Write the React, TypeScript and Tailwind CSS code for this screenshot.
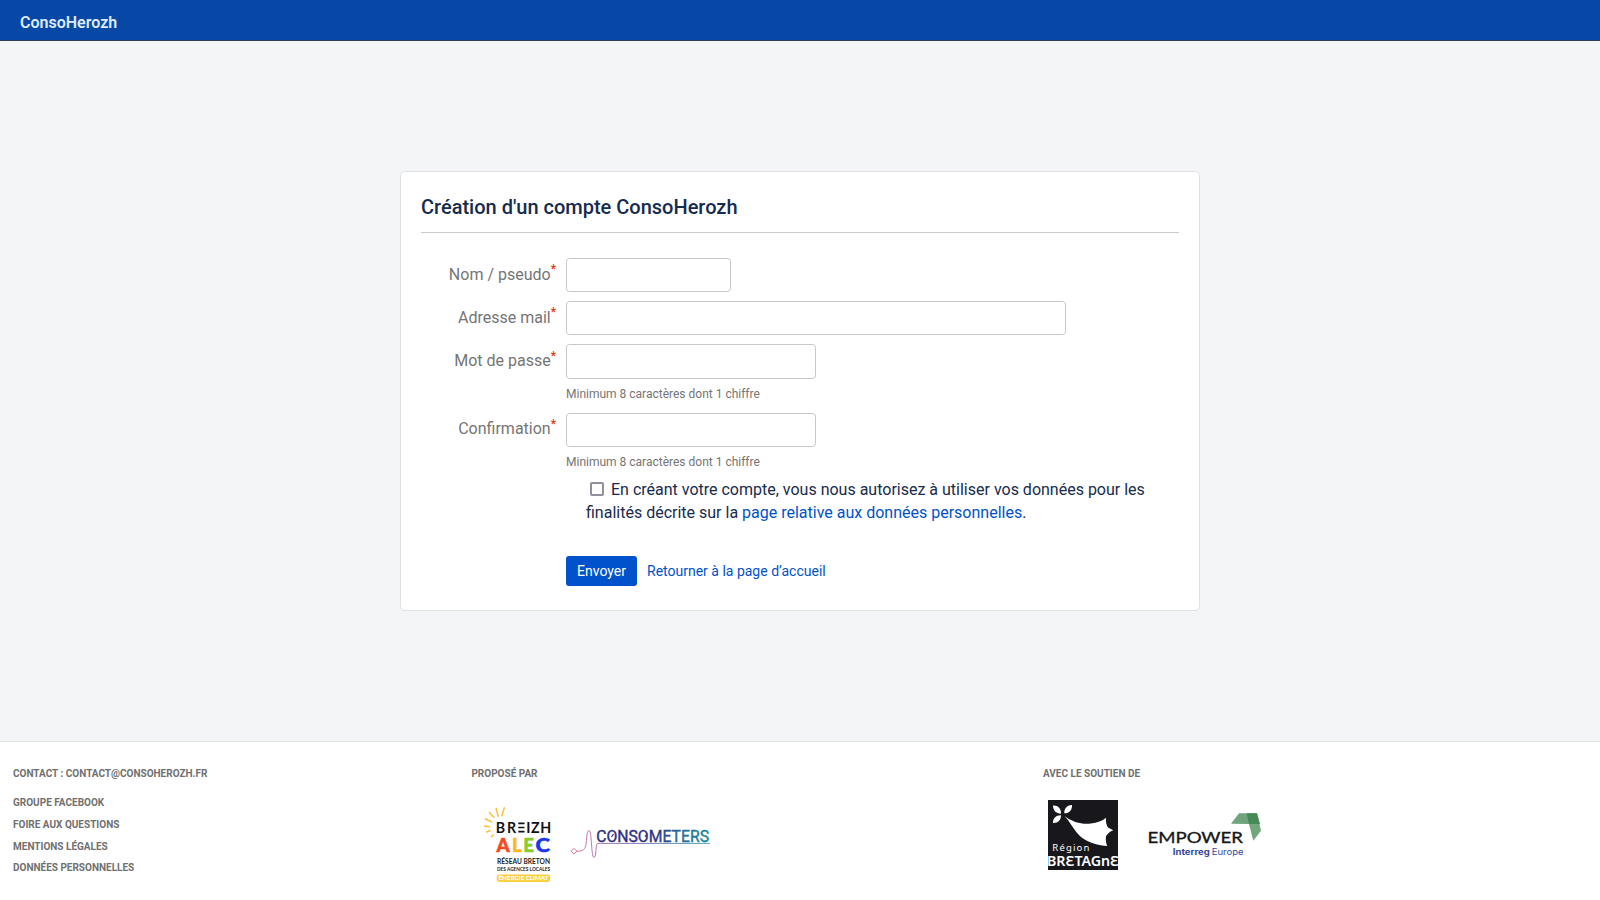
import React from "react";

type FieldProps = {
  id: string;
  label: string;
  type?: string;
  inputClass: string;
  labelClass?: string;
  markClass?: string;
  className?: string;
  description?: string;
};

function Field({
  id,
  label,
  type = "text",
  inputClass,
  labelClass = "pt-[6px]",
  markClass = "-top-[7px]",
  className = "",
  description,
}: FieldProps) {
  return (
    <div className={`flex gap-[10px] ${className}`}>
      <label htmlFor={id} className={`w-[135px] shrink-0 text-right text-[#757575] ${labelClass}`}>
        {label}
        <span className={`relative text-[12px] leading-none font-medium text-[#de350b] ${markClass}`}>*</span>
      </label>
      <div className="flex flex-col">
        <input
          id={id}
          type={type}
          className={`rounded-[3.5px] border border-[#c7c7c9] bg-white px-2 outline-none ${inputClass}`}
        />
        {description && <div className="mt-[5px] text-xs leading-5 text-[#757575]">{description}</div>}
      </div>
    </div>
  );
}

function BreizhAlecLogo() {
  return (
    <svg width="80" height="85" viewBox="0 0 80 85" fontFamily="Lato, sans-serif" aria-label="Breizh ALEC">
      <path
        d="M29.5 7.3 26.7 16.3M21 8l2.3 8.700M14 12l5.300 5.700M10 18.700l7 3.300M9 26l6 .700M11.300 32.300l4.200-2M16.300 37.300l2.200-2.800"
        stroke="#fbbf3a"
        strokeWidth="1.500"
      />
      <text y="32.600" fontSize="14.200" fontWeight="700" fill="#111" x="20.800 32">BR</text>
      <path d="M43.300 23.300h6.200M43.300 27.500h6.200M43.300 31.700h6.200" stroke="#111" strokeWidth="1.700" />
      <text y="32.600" fontSize="14.200" fontWeight="700" fill="#111" x="51.200 56 65.200">IZH</text>
      <g fontSize="18.800" fontWeight="900" strokeWidth="0.500">
        <text x="21.400" y="51.800" fill="#f4481e" stroke="#f4481e">A</text>
        <text x="37" y="51.800" fill="#fdb823" stroke="#fdb823">L</text>
        <text x="48.200" y="51.800" fill="#8ccb2b" stroke="#8ccb2b">E</text>
        <text x="60.500" y="51.800" fill="#1a35ee" stroke="#1a35ee" textLength="14.500" lengthAdjust="spacingAndGlyphs">C</text>
      </g>
      <text x="22" y="64" fontSize="7" fontWeight="700" fill="#222" textLength="53" lengthAdjust="spacingAndGlyphs">RÉSEAU BRETON</text>
      <text x="22" y="71.400" fontSize="5.200" fontWeight="700" fill="#222" textLength="53" lengthAdjust="spacingAndGlyphs">DES AGENCES LOCALES</text>
      <rect x="21.700" y="74.600" width="53.600" height="7.400" rx="3" fill="#fbd043" />
      <text x="23.500" y="80.400" fontSize="5.700" fontWeight="900" fill="#fff" textLength="50" lengthAdjust="spacingAndGlyphs">ÉNERGIE CLIMAT</text>
    </svg>
  );
}

function ConsometersLogo() {
  return (
    <svg width="150" height="50" viewBox="0 0 150 50" aria-label="Consometers">
      <defs>
        <linearGradient id="cm-line" gradientUnits="userSpaceOnUse" x1="5" y1="0" x2="145" y2="0">
          <stop offset="0" stopColor="#f0647f" />
          <stop offset="0.2" stopColor="#a06bb0" />
          <stop offset="0.5" stopColor="#6a69b0" />
          <stop offset="1" stopColor="#3a9fa8" />
        </linearGradient>
        <linearGradient id="cm-text" gradientUnits="userSpaceOnUse" x1="32" y1="0" x2="144" y2="0">
          <stop offset="0" stopColor="#2b2a78" />
          <stop offset="0.5" stopColor="#2a3184" />
          <stop offset="0.72" stopColor="#28679a" />
          <stop offset="1" stopColor="#148692" />
        </linearGradient>
      </defs>
      <path
        d="M12 36.200c6 0 8.500-1.500 9.200-8C21.900 21 22 15.500 24 15.500C27 15.500 26 42.500 29 42.500C31.500 42.500 30.500 28.400 32.500 28.400H145M6 36.200 9 33.500 12 36.200 9 38.900Z"
        fill="none"
        stroke="url(#cm-line)"
        strokeWidth="0.900"
      />
      <text x="31.200" y="26.800" fontFamily="Roboto, sans-serif" fontSize="16" fontWeight="400" fill="url(#cm-text)" stroke="url(#cm-text)" strokeWidth="0.350" textLength="112.800" lengthAdjust="spacingAndGlyphs">CONSOMETERS</text>
      <path d="m46.500 21.800 2-2.600M80 21.800l2-2.600" stroke="#2b2a78" strokeWidth="1.100" />
    </svg>
  );
}

function BretagneLogo() {
  return (
    <svg width="70" height="70" viewBox="0 0 70 70" aria-label="Région Bretagne">
      <rect width="70" height="70" fill="#18171c" />
      <g fill="#fff">
        <path d="M5 5.500C9 4.800 13.500 8 13 13.700C8 13.500 5 10.500 5 5.500ZM24 5C24.500 10 21 13.500 16.300 13.300C16 8.500 19.500 5 24 5ZM5 23C4.500 18.500 8.500 15 13 15.300C13.300 20 9.500 23.500 5 23Z" />
        <path d="M16.500 16C25 22.500 34 24.500 43 23.500C49 22.800 54.500 21 58 17.700C57.500 21.500 58.500 25.500 60 27.500L65.300 30.300C62 31.500 59.500 34 58 36C57.500 39.500 58 43.500 59.300 46C51 45.500 40 43 33 37C26 31 22.500 22 16.500 16Z" />
        <text x="4.300" y="51" fontFamily="'Noto Sans', sans-serif" fontSize="9.500" textLength="37" lengthAdjust="spacing">Région</text>
        <text x="-1" y="65.700" fontFamily="'Noto Sans', sans-serif" fontSize="14" fontWeight="600" textLength="72" lengthAdjust="spacingAndGlyphs">BRƐTAGnƐ</text>
      </g>
    </svg>
  );
}

function EmpowerLogo() {
  return (
    <svg width="130" height="60" viewBox="0 0 130 60" aria-label="Empower Interreg Europe">
      <path d="M91 18.700 99 8.300H117L109 19Z" fill="#6fa47c" />
      <path d="M117 8.300 121 25.700 113.300 35.700 109 19Z" fill="#72a77e" />
      <path d="M106.700 8.300H117L120 19H109Z" fill="#468a57" />
      <text x="7.500" y="38" fontFamily="Lato, sans-serif" fontSize="15.400" fontWeight="400" fill="#171717" stroke="#171717" strokeWidth="0.350" textLength="95.500" lengthAdjust="spacingAndGlyphs">EMPOWER</text>
      <text x="32.800" y="49.600" fontFamily="Inter, sans-serif" fontSize="8.300" fontWeight="700" fill="#33489c" textLength="37" lengthAdjust="spacingAndGlyphs">Interreg</text>
      <text x="71.800" y="49.600" fontFamily="Inter, sans-serif" fontSize="8.300" fill="#33489c" textLength="31.800" lengthAdjust="spacingAndGlyphs">Europe</text>
    </svg>
  );
}

const links = ["Groupe Facebook", "Foire aux questions", "Mentions légales", "Données personnelles"];

export default function App() {
  return (
    <div className="flex h-[900px] flex-col overflow-hidden bg-[#f4f5f7] font-[Roboto,sans-serif] text-base leading-[22.86px] text-[#172b4d]">
      <header className="flex h-[41px] shrink-0 items-center border-b border-[#2e3d54] bg-[#0747a6] px-5 pt-[6px]">
        <a href="#" className="font-semibold text-[#deebff]">ConsoHerozh</a>
      </header>

      <main className="flex flex-1 items-center justify-center">
        <section className="h-[440px] w-[800px] rounded-[5px] border border-[#dfe1e6] bg-white px-5 pt-5">
          <h1 className="h-[41px] border-b border-[#ccc] pt-[3px] text-xl leading-[24px] font-medium">
            Création d'un compte ConsoHerozh
          </h1>
          <form className="flex flex-col pt-[25px]" onSubmit={(e) => e.preventDefault()}>
            <Field id="name" label="Nom / pseudo" inputClass="h-[34px] w-[165px]" />
            <Field id="email" label="Adresse mail" type="email" inputClass="h-[34px] w-[500px]" className="mt-[9px]" />
            <Field
              id="password"
              label="Mot de passe"
              type="password"
              inputClass="h-[35px] w-[250px]"
              markClass="-top-[6px]"
              className="mt-[9px]"
              description="Minimum 8 caractères dont 1 chiffre"
            />
            <Field
              id="confirm"
              label="Confirmation"
              type="password"
              inputClass="h-[34px] w-[250px]"
              labelClass="pt-[5px]"
              markClass="-top-[6px]"
              className="mt-[9px]"
              description="Minimum 8 caractères dont 1 chiffre"
            />
            <label className="mt-[7px] ml-[165px]">
              <input
                type="checkbox"
                className="mr-[7px] ml-[4px] h-[14px] w-[14px] appearance-none rounded-[2px] border-2 border-[#8f8f9d] bg-white align-[-1px]"
              />
              En créant votre compte, vous nous autorisez à utiliser vos données pour les finalités décrite sur la{" "}
              <a href="#" className="text-[#0052cc]">page relative aux données personnelles</a>.
            </label>
            <div className="mt-[31px] ml-[145px] flex items-center gap-[10px] text-sm">
              <button type="submit" className="h-[30px] w-[71px] rounded-[3px] bg-[#0052cc] text-white">Envoyer</button>
              <a href="#" className="text-[#0052cc]">Retourner à la page d’accueil</a>
            </div>
          </form>
        </section>
      </main>

      <footer className="flex h-[159px] shrink-0 border-t border-[#dfe1e6] bg-white pt-[25px] pl-[13px] text-[10px] leading-[14px] text-[#707070]">
        <div className="w-[458.4px] font-bold uppercase">
          <div>Contact : contact@consoherozh.fr</div>
          <ul className="mt-[11.4px] leading-[21.6px]">
            {links.map((l) => (
              <li key={l}><a href="#">{l}</a></li>
            ))}
          </ul>
        </div>
        <div className="w-[571.6px]">
          <div className="font-bold uppercase">Proposé par</div>
          <div className="mt-[19px] ml-[3.6px] flex gap-[10px]">
            <BreizhAlecLogo />
            <div className="mt-[15px]"><ConsometersLogo /></div>
          </div>
        </div>
        <div>
          <div className="font-bold uppercase">Avec le soutien de</div>
          <div className="mt-[19px] ml-[5px] flex gap-[22px]">
            <BretagneLogo />
            <div className="mt-[5px]"><EmpowerLogo /></div>
          </div>
        </div>
      </footer>
    </div>
  );
}
